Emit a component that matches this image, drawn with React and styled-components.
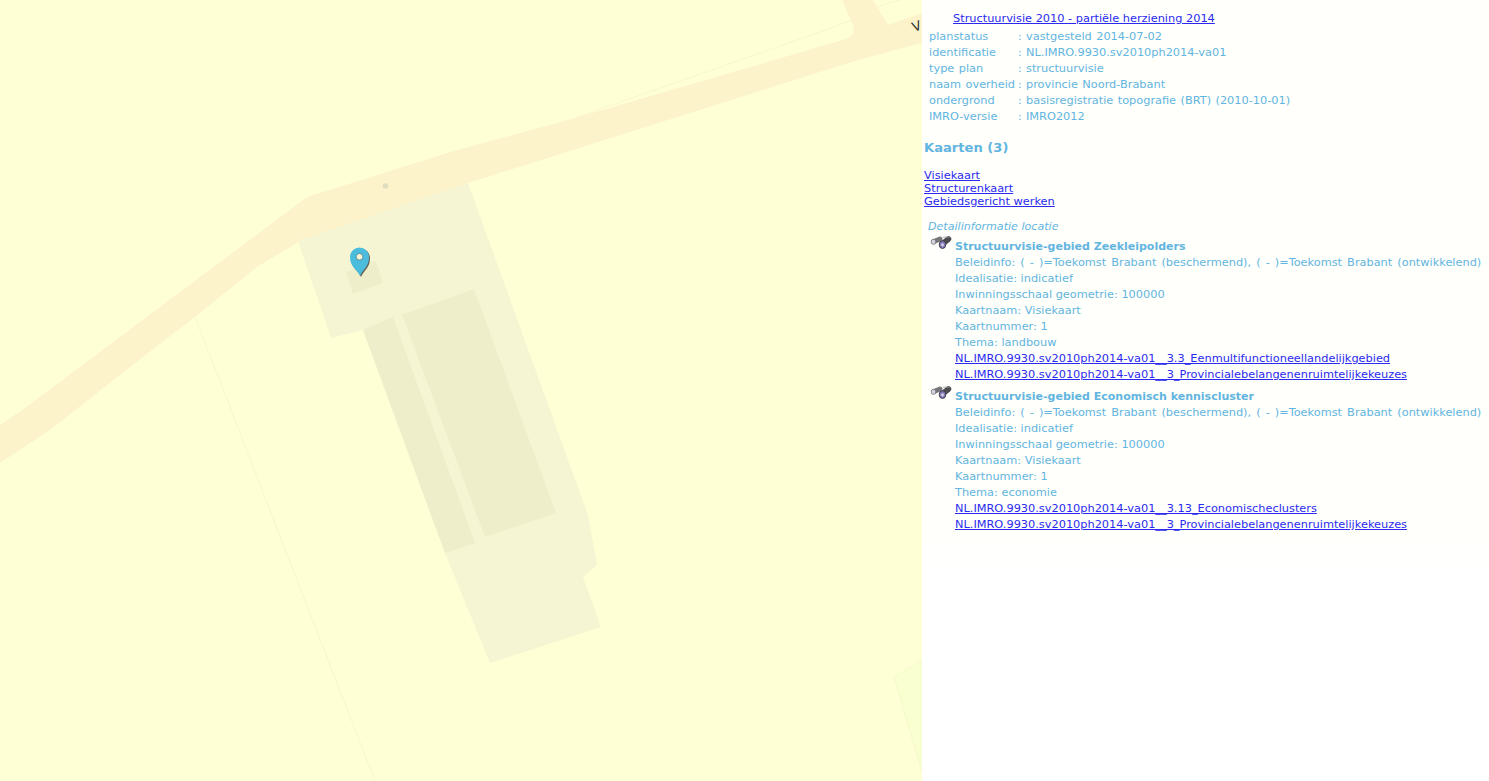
import React from 'react';
import styled, { createGlobalStyle } from 'styled-components';

const GlobalStyle = createGlobalStyle`
  html, body {
    margin: 0;
    padding: 0;
    background: #fff;
  }
`;

const Page = styled.div`
  display: flex;
  width: 100%;
  height: 781px;
  overflow: hidden;
  font-family: 'DejaVu Sans', Verdana, sans-serif;
  font-size: 11.33px;
  color: #62b5e0;
`;

const MapPane = styled.div`
  flex: 0 0 922px;
  height: 100%;
  background: #ffffd5;
`;

const MapSvg = styled.svg`
  display: block;
`;

const Panel = styled.div`
  flex: 1;
  min-width: 0;
  padding: 10px 0 0 2px;
  background: linear-gradient(#fffffb 0, #fffffb 530px, #fff 570px);
`;

const PlanLink = styled.a`
  display: block;
  margin-left: 29px;
  line-height: 16px;
  color: #2a2af0;
  text-decoration: underline;
`;

const PlanTable = styled.div`
  display: grid;
  grid-template-columns: 89px 8px auto;
  justify-content: start;
  margin: 2px 0 0 5px;
  line-height: 16px;
  word-spacing: 0.8px;
`;

const SectionTitle = styled.h2`
  margin: 14px 0 0;
  font-size: 13.1px;
  line-height: 20px;
  font-weight: bold;
`;

const MapLinks = styled.div`
  display: flex;
  flex-direction: column;
  margin-top: 11px;
`;

const MapLink = styled.a`
  line-height: 13px;
  color: #2a2af0;
  text-decoration: underline;
`;

const DetailHeading = styled.div`
  margin: 11px 0 0 4px;
  font-size: 11.1px;
  line-height: 16px;
  font-style: italic;
`;

const Feature = styled.div`
  display: grid;
  grid-template-columns: 24px auto;
  justify-content: start;
  margin: 4px 0 0 7px;

  & + & {
    margin-top: 7px;
  }
`;

const FeatureIcon = styled.svg`
  display: block;
  margin-top: -3px;
  margin-left: -1px;
`;

const FeatureBody = styled.div`
  display: flex;
  flex-direction: column;
  line-height: 16px;
  white-space: nowrap;
`;

const FeatureTitle = styled.strong`
  height: 15px;
  font-size: 11px;
  font-weight: bold;
`;

const PolicyLine = styled.span`
  word-spacing: 1.45px;
`;

const FeatureLink = styled.a`
  color: #2a2af0;
  text-decoration: underline;
`;

const planRows = [
  ['planstatus', 'vastgesteld 2014-07-02'],
  ['identificatie', 'NL.IMRO.9930.sv2010ph2014-va01'],
  ['type plan', 'structuurvisie'],
  ['naam overheid', 'provincie Noord-Brabant'],
  ['ondergrond', 'basisregistratie topografie (BRT) (2010-10-01)'],
  ['IMRO-versie', 'IMRO2012'],
];

const features = [
  {
    title: 'Structuurvisie-gebied Zeekleipolders',
    thema: 'landbouw',
    links: [
      'NL.IMRO.9930.sv2010ph2014-va01__3.3_Eenmultifunctioneellandelijkgebied',
      'NL.IMRO.9930.sv2010ph2014-va01__3_Provincialebelangenenruimtelijkekeuzes',
    ],
  },
  {
    title: 'Structuurvisie-gebied Economisch kenniscluster',
    thema: 'economie',
    links: [
      'NL.IMRO.9930.sv2010ph2014-va01__3.13_Economischeclusters',
      'NL.IMRO.9930.sv2010ph2014-va01__3_Provincialebelangenenruimtelijkekeuzes',
    ],
  },
];

function Binoculars() {
  return (
    <FeatureIcon width="22" height="14" viewBox="0 0 22 14">
      <line x1="4" y1="5.500" x2="10" y2="3" stroke="#77777c" strokeWidth="5" strokeLinecap="round" />
      <line x1="13" y1="7.500" x2="18.500" y2="3" stroke="#4b4b50" strokeWidth="5.500" strokeLinecap="round" />
      <ellipse cx="3.500" cy="5.800" rx="2.300" ry="2.600" fill="#d6d6e2" stroke="#66666c" strokeWidth="0.7" />
      <ellipse cx="12.500" cy="8.600" rx="3.300" ry="3.900" fill="#8078b4" stroke="#3c3c42" strokeWidth="0.9" />
      <ellipse cx="12.500" cy="8.800" rx="1.300" ry="1.600" fill="#d8d6f0" />
      <path d="M13 1.200 L20 1" stroke="#9a9a9e" strokeWidth="0.8" />
    </FeatureIcon>
  );
}

function MapDrawing() {
  return (
    <MapSvg width="922" height="781" viewBox="0 0 922 781">
      <polygon points="894,677 922,660 922,772" fill="#f9ffcf" stroke="#f5f8cc" strokeWidth="1" />
      <polyline points="195,317 375,781" fill="none" stroke="#f6f7cd" strokeWidth="1" />
      <polyline points="575,118 820,32 852,20" fill="none" stroke="#f8f5cc" strokeWidth="1" />
      <polyline points="875,7 900,0" fill="none" stroke="#f8f5cc" strokeWidth="1" />
      <path
        d="M0 425 L25 408 L307 197 L457 150 L575 118 L846 39 Q856 35 853 25 L842 0 L873 0 L888 25 L922 13 L922 43 L858 60 L573 150 L468 183 L340 227 L297 243 L257 267 L195 317 L143 357 L50 430 L0 463 Z"
        fill="#fdf3cb"
      />
      <polygon
        points="298,241 468,183 588,515 597,565 583,577 601,627 490,663 445,553 363,330 331,338"
        fill="#f5f5d3"
      />
      <polygon points="363,330 393,317 475,543 445,553" fill="#eeeecb" />
      <polygon points="402,315 474,289 556,513 485,537" fill="#eeeecb" />
      <polygon points="346,272 376,261 383,283 353,294" fill="#eeeecb" />
      <circle cx="385.500" cy="186" r="2.800" fill="#dedfc0" />
      <text x="914" y="32" fontSize="13" fill="#333" transform="rotate(-20 914 32)">V</text>
      <path
        d="M361 277 C358 270 351 268 351 258 A9.500 9.500 0 0 1 370 258 C370 268 364 270 361 277 Z"
        fill="#3c3c34"
        opacity="0.8"
      />
      <path
        d="M360 276 C357 269 350 267 350 257 A9.500 9.500 0 0 1 369 257 C369 267 363 269 360 276 Z"
        fill="#4cbcdc"
      />
      <circle cx="359.500" cy="256.800" r="3.300" fill="#f7f5d6" stroke="#3a6a70" strokeWidth="0.6" />
    </MapSvg>
  );
}

export default function App() {
  return (
    <Page>
      <GlobalStyle />
      <MapPane>
        <MapDrawing />
      </MapPane>
      <Panel>
        <PlanLink href="#">Structuurvisie 2010 - partiële herziening 2014</PlanLink>
        <PlanTable>
          {planRows.map(([label, value]) => (
            <React.Fragment key={label}>
              <span>{label}</span>
              <span>:</span>
              <span>{value}</span>
            </React.Fragment>
          ))}
        </PlanTable>
        <SectionTitle>Kaarten (3)</SectionTitle>
        <MapLinks>
          <MapLink href="#">Visiekaart</MapLink>
          <MapLink href="#">Structurenkaart</MapLink>
          <MapLink href="#">Gebiedsgericht werken</MapLink>
        </MapLinks>
        <DetailHeading>Detailinformatie locatie</DetailHeading>
        {features.map((feature) => (
          <Feature key={feature.title}>
            <Binoculars />
            <FeatureBody>
              <FeatureTitle>{feature.title}</FeatureTitle>
              <PolicyLine>Beleidinfo: ( - )=Toekomst Brabant (beschermend), ( - )=Toekomst Brabant (ontwikkelend)</PolicyLine>
              <span>Idealisatie: indicatief</span>
              <span>Inwinningsschaal geometrie: 100000</span>
              <span>Kaartnaam: Visiekaart</span>
              <span>Kaartnummer: 1</span>
              <span>Thema: {feature.thema}</span>
              {feature.links.map((link) => (
                <FeatureLink key={link} href="#">{link}</FeatureLink>
              ))}
            </FeatureBody>
          </Feature>
        ))}
      </Panel>
    </Page>
  );
}
